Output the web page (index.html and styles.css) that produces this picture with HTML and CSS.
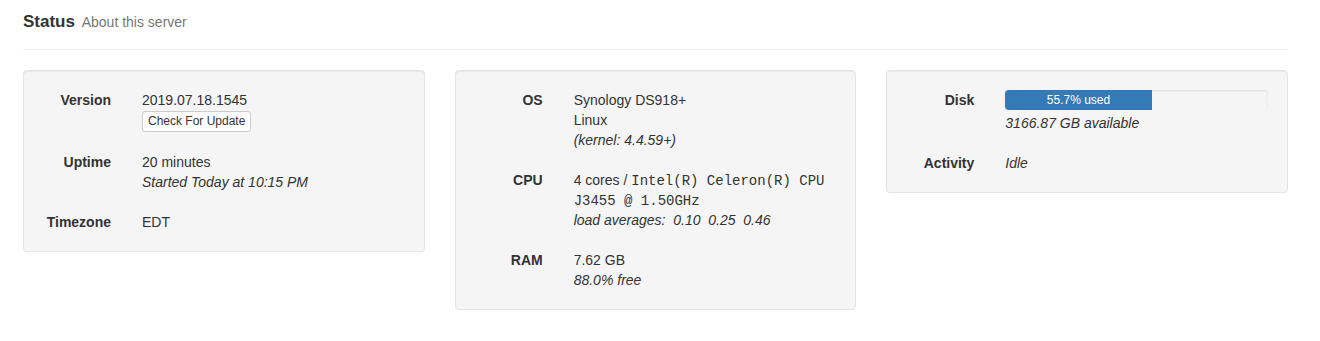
FILE: index.html
```html
<!DOCTYPE html>
<html lang="en">
<head>
    <meta charset="UTF-8">
    <meta name="viewport" content="width=device-width, initial-scale=1.0">
    <title>Status</title>
    <link rel="stylesheet" href="styles.css">
</head>
<body>
    <div class="page">
        <div class="page-header">
            <h1>Status <small>About this server</small></h1>
        </div>

        <div class="row">
            <div class="well">
                <dl class="info">
                    <dt>Version</dt>
                    <dd>
                        <div>2019.07.18.1545</div>
                        <button class="btn-xs">Check For Update</button>
                    </dd>

                    <dt>Uptime</dt>
                    <dd>
                        <div>20 minutes</div>
                        <div class="muted">Started Today at 10:15 PM</div>
                    </dd>

                    <dt>Timezone</dt>
                    <dd>EDT</dd>
                </dl>
            </div>

            <div class="well">
                <dl class="info">
                    <dt>OS</dt>
                    <dd>
                        <div>Synology DS918+</div>
                        <div>Linux</div>
                        <div class="muted">(kernel: 4.4.59+)</div>
                    </dd>

                    <dt>CPU</dt>
                    <dd>
                        <div>4 cores / <code>Intel(R) Celeron(R) CPU J3455 @ 1.50GHz</code></div>
                        <div class="muted">load averages:&nbsp; 0.10&nbsp; 0.25&nbsp; 0.46</div>
                    </dd>

                    <dt>RAM</dt>
                    <dd>
                        <div>7.62 GB</div>
                        <div class="muted">88.0% free</div>
                    </dd>
                </dl>
            </div>

            <div class="well">
                <dl class="info">
                    <dt>Disk</dt>
                    <dd>
                        <div class="progress">
                            <div class="progress-bar" style="width: 55.7%">55.7% used</div>
                        </div>
                        <div class="muted">3166.87 GB available</div>
                    </dd>

                    <dt>Activity</dt>
                    <dd class="muted">Idle</dd>
                </dl>
            </div>
        </div>
    </div>
</body>
</html>
```

FILE: styles.css
```css
body {
    margin: 0;
    font-family: "Liberation Sans", Arial, sans-serif;
    font-size: 14px;
    line-height: 20px;
    color: #333;
    background-color: #fff;
}

.page {
    width: 1265px;
    padding-left: 23px;
}

.page-header {
    padding: 10px 0 15px;
    border-bottom: 1px solid #eee;
    margin-bottom: 20px;
}

.page-header h1 {
    margin: 0;
    font-size: 17px;
    line-height: 24px;
    font-weight: bold;
}

.page-header small {
    margin-left: 2px;
    font-size: 14px;
    font-weight: normal;
    color: #777;
}

.row {
    display: grid;
    grid-template-columns: repeat(3, 1fr);
    gap: 30px;
    align-items: start;
}

.well {
    background-color: #f5f5f5;
    border: 1px solid #e3e3e3;
    border-radius: 4px;
    padding: 19px;
    box-shadow: inset 0 1px 1px rgba(0, 0, 0, 0.05);
}

.info {
    display: grid;
    grid-template-columns: 68px 1fr;
    column-gap: 31px;
    row-gap: 20px;
    margin: 0;
}

.info dt {
    text-align: right;
    font-weight: bold;
    white-space: nowrap;
}

.info dd {
    margin: 0;
}

.muted {
    font-style: italic;
}

code {
    font-family: "Liberation Mono", "Courier New", monospace;
    font-size: 14px;
    line-height: 1;
}

.btn-xs {
    display: block;
    margin-top: 1px;
    font-family: inherit;
    font-size: 12px;
    line-height: 17px;
    padding: 1px 5px;
    color: #333;
    background-color: #fff;
    border: 1px solid #ccc;
    border-radius: 3px;
    cursor: pointer;
}

.progress {
    height: 20px;
    margin-bottom: 3px;
    background-color: #f5f5f5;
    border-radius: 4px;
    overflow: hidden;
    box-shadow: inset 0 1px 2px rgba(0, 0, 0, 0.1);
}

.progress-bar {
    height: 100%;
    background-color: #337ab7;
    color: #fff;
    font-size: 12px;
    line-height: 20px;
    text-align: center;
}
```
